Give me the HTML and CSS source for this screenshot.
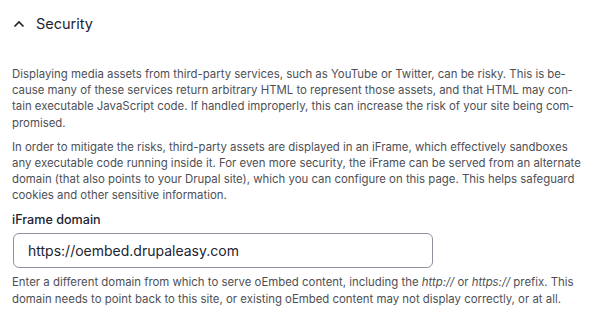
FILE: index.html
```html
<!DOCTYPE html>
<html lang="en">

<head>
    <title>Security</title>
    <link rel="stylesheet" href="styles.css">
</head>

<body>
    <details class="panel" open>
        <summary class="panel-title">
            <svg class="chevron" width="12" height="8" viewBox="0 0 12 8">
                <path d="M1.5 6.5 L6 2 L10.5 6.5" fill="none" stroke="#222330" stroke-width="1.7" />
            </svg>
            Security
        </summary>

        <div class="panel-body">
            <p>Displaying media assets from third-party services, such as YouTube or Twitter, can be risky. This is be&shy;cause many of these services return arbitrary HTML to represent those assets, and that HTML may con&shy;tain executable JavaScript code. If handled improperly, this can increase the risk of your site being com&shy;promised.</p>
            <p>In order to mitigate the risks, third-party assets are displayed in an iFrame, which effectively sandboxes any executable code running inside it. For even more security, the iFrame can be served from an alternate domain (that also points to your Drupal site), which you can configure on this page. This helps safeguard cookies and other sensitive information.</p>

            <div class="form-item">
                <label for="iframe-domain">iFrame domain</label>
                <input type="text" id="iframe-domain" value="https://oembed.drupaleasy.com">
                <div class="description">
                    Enter a different domain from which to serve oEmbed content, including the <em>http://</em> or <em>https://</em> prefix. This domain needs to point back to this site, or existing oEmbed content may not display correctly, or at all.
                </div>
            </div>
        </div>
    </details>
</body>

</html>
```

FILE: styles.css
```css
body {
    margin: 0;
    background-color: #ffffff;
    color: #222330;
    font-family: Inter, "Noto Sans", sans-serif;
}

.panel {
    margin: 0;
}

.panel-title {
    list-style: none;
    display: flex;
    align-items: center;
    gap: 11px;
    padding: 14px 12px 14px 13px;
    font-size: 14.5px;
    line-height: 20px;
    cursor: pointer;
}

.panel-title::-webkit-details-marker {
    display: none;
}

.chevron {
    display: block;
}

.panel-body {
    padding: 18px 16px 0 12px;
}

.panel-body p {
    margin: 0 0 8px 0;
    font-size: 11.4px;
    line-height: 16.2px;
    color: #4e4f56;
}

.form-item {
    margin-top: 0;
}

.form-item label {
    display: block;
    font-size: 12.6px;
    font-weight: 500;
    line-height: 16px;
    margin-bottom: 5px;
}

.form-item input {
    box-sizing: border-box;
    width: 420px;
    height: 35px;
    margin-left: 1px;
    padding: 0 14px;
    border: 1px solid #8e929c;
    border-radius: 6px;
    font-family: inherit;
    font-size: 14px;
    color: #222330;
}

.description {
    margin-top: 6px;
    font-size: 11.4px;
    line-height: 17px;
    color: #4e4f56;
}
```
